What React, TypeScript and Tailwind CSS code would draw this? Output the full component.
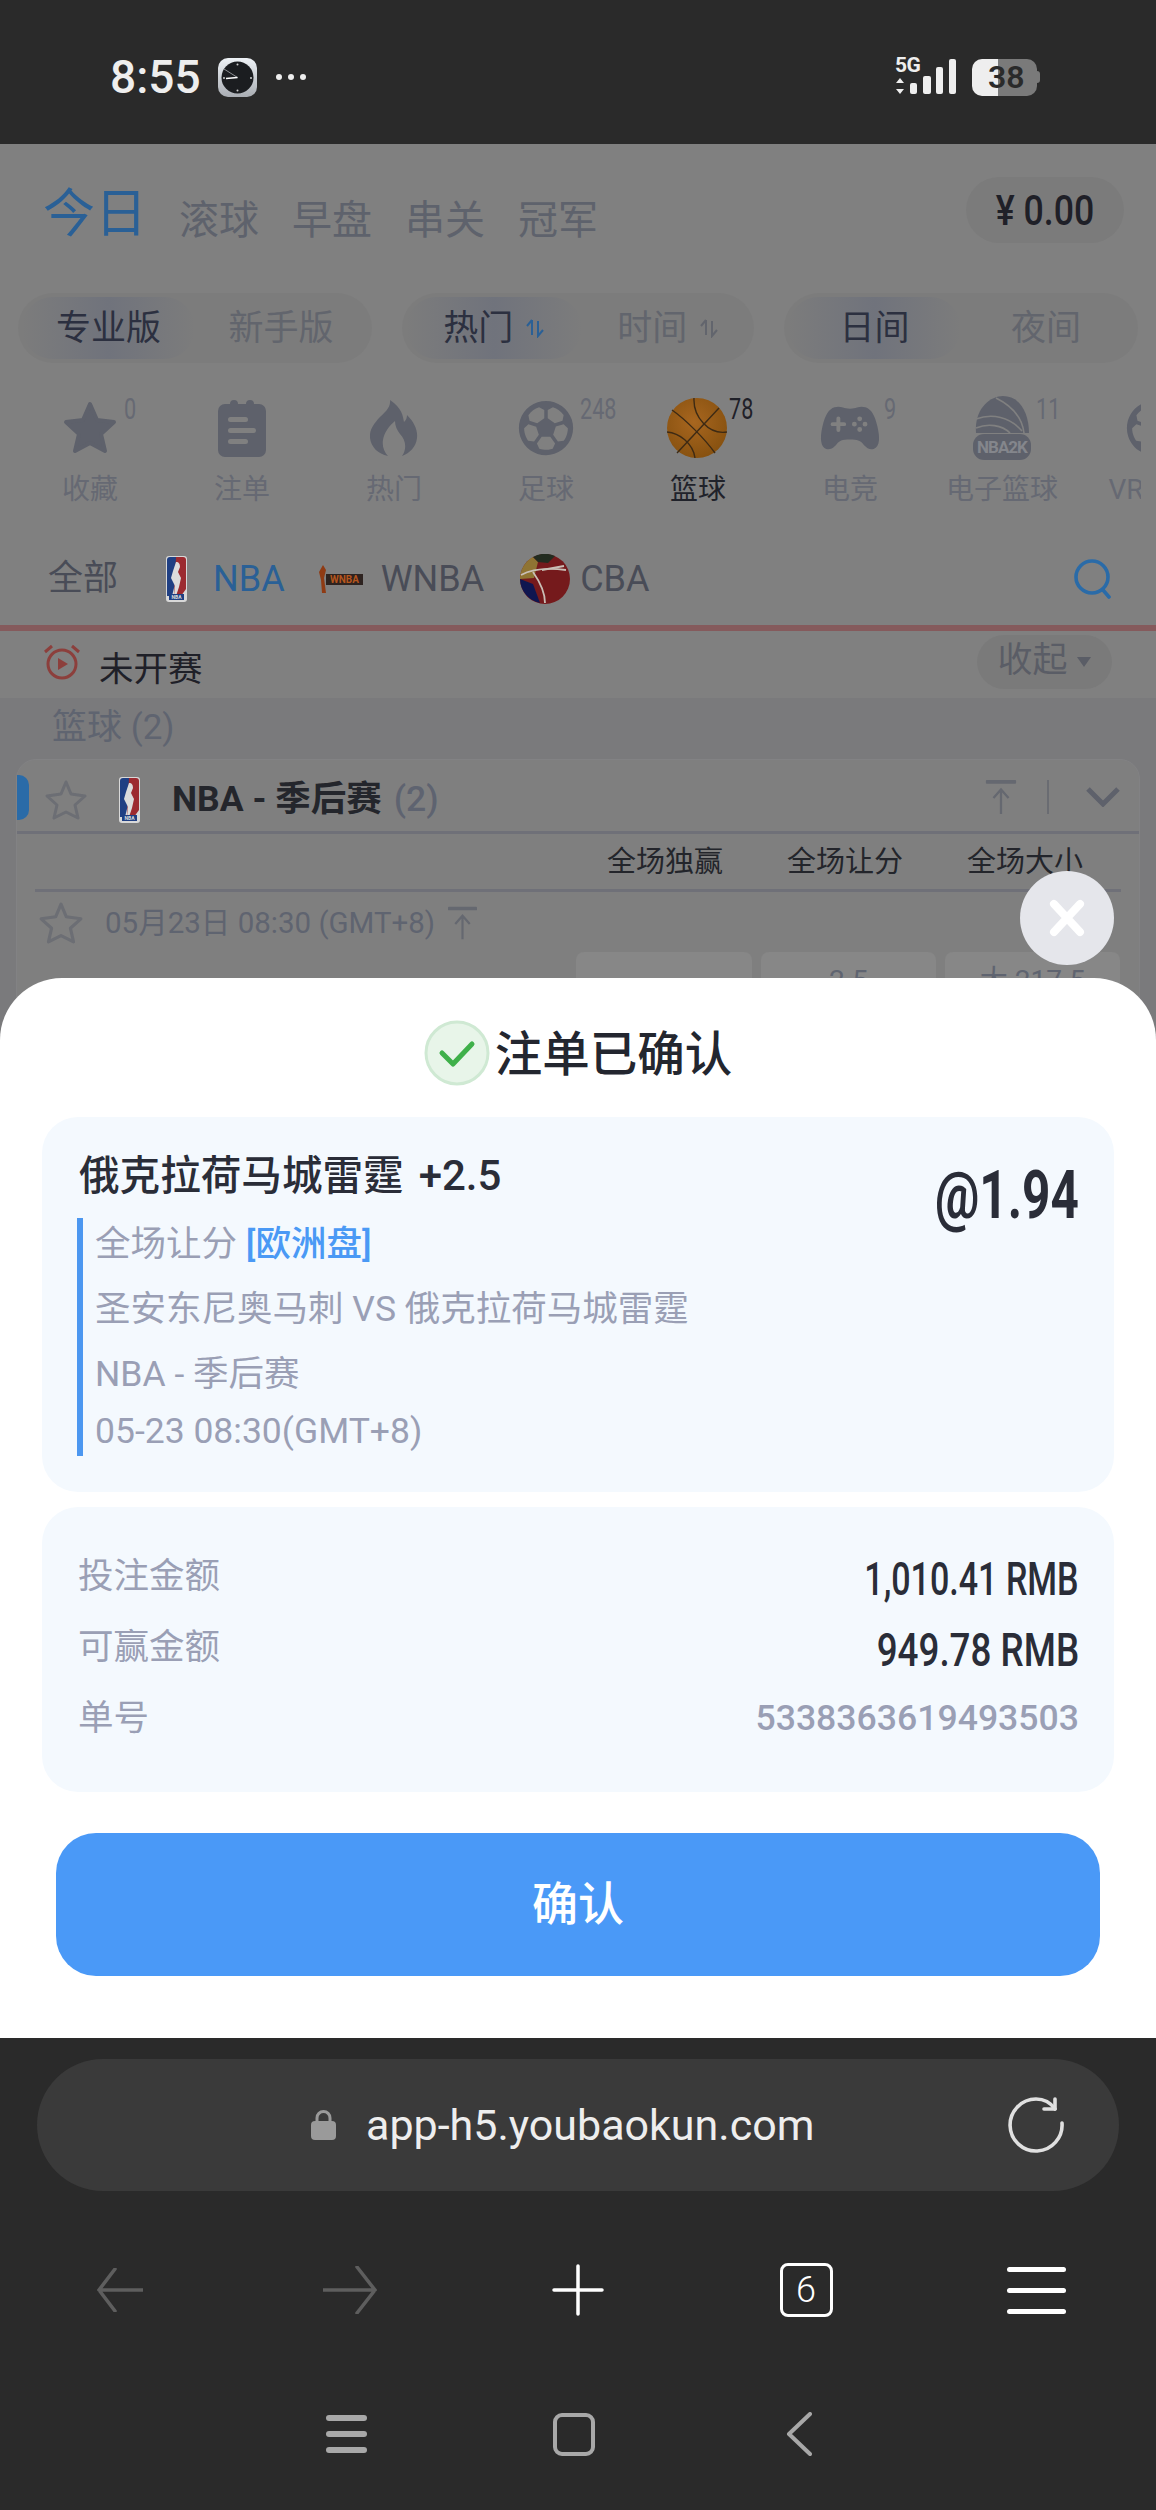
import { FaRegFutbol } from "react-icons/fa";
import { IoGameController } from "react-icons/io5";

const sports = [
  { label: "收藏", count: "0", icon: <StarIcon /> },
  { label: "注单", count: "", icon: <SlipIcon /> },
  { label: "热门", count: "", icon: <FlameIcon /> },
  { label: "足球", count: "248", icon: <FaRegFutbol className="w-[56px] h-[56px] text-[#5e616b]" /> },
  { label: "篮球", count: "78", icon: <BasketballIcon />, active: true },
  { label: "电竞", count: "9", icon: <IoGameController className="w-[62px] h-[62px] text-[#5e616b]" /> },
  { label: "电子篮球", count: "11", icon: <Nba2kIcon /> },
  { label: "VR体育", count: "", icon: <FaRegFutbol className="w-[56px] h-[56px] text-[#5e616b]" /> },
];

function StarIcon() {
  return (
    <svg viewBox="0 0 56 56" className="w-[56px] h-[56px]">
      <path d="M28 4 L35 20 L52 22 L39 34 L43 51 L28 43 L13 51 L17 34 L4 22 L21 20 Z" fill="#5e616b" stroke="#5e616b" strokeWidth="4" strokeLinejoin="round" />
    </svg>
  );
}

function OutlineStar({ className }: { className: string }) {
  return (
    <svg viewBox="0 0 44 44" className={className}>
      <path d="M22 4 L27 16 L41 18 L31 27 L34 40 L22 34 L10 40 L13 27 L3 18 L17 16 Z" fill="none" stroke="#6c6e74" strokeWidth="3" strokeLinejoin="round" />
    </svg>
  );
}

function SlipIcon() {
  return (
    <svg viewBox="0 0 48 58" className="w-[48px] h-[58px]">
      <path d="M7 5 h5 a4 4 0 0 1 8 0 h8 a4 4 0 0 1 8 0 h5 a7 7 0 0 1 7 7 v39 a7 7 0 0 1 -7 7 h-34 a7 7 0 0 1 -7 -7 v-39 a7 7 0 0 1 7 -7 z" fill="#5e616b" />
      <rect x="10" y="18" width="20" height="5" rx="2.5" fill="#808080" />
      <rect x="10" y="29" width="28" height="5" rx="2.5" fill="#808080" />
      <rect x="10" y="40" width="20" height="5" rx="2.5" fill="#808080" />
    </svg>
  );
}

function FlameIcon() {
  return (
    <svg viewBox="0 0 48 56" className="w-[48px] h-[56px]">
      <path d="M20 0 C32 8 33 16 34 22 C36 20 37 18 37 15 C44 22 48 30 47 38 C46 47 40 53 32 56 C37 49 36 40 30 34 C27 30 25 26 25 21 C19 26 14 33 13 40 C12 46 14 52 18 56 C8 54 1 47 0 38 C-1 30 4 24 9 18 C14 13 21 8 20 0 Z" fill="#5e616b" />
    </svg>
  );
}

function BasketballIcon() {
  return (
    <svg viewBox="0 0 60 62" className="w-[60px] h-[62px] -ml-[3px]">
      <defs>
        <radialGradient id="ball" cx="45%" cy="40%" r="65%">
          <stop offset="0%" stopColor="#a8661f" />
          <stop offset="100%" stopColor="#85500f" />
        </radialGradient>
      </defs>
      <circle cx="30" cy="31" r="30" fill="url(#ball)" />
      <g fill="none" stroke="#3d2a14" strokeWidth="1.4">
        <path d="M27 1 C26 20 42 38 60 35" />
        <path d="M52 11 L10 56" />
        <path d="M5 13 C18 22 38 42 48 56" />
        <path d="M0 35 C12 36 26 46 28 61" />
      </g>
    </svg>
  );
}

function Nba2kIcon() {
  return (
    <svg viewBox="0 0 60 66" className="w-[60px] h-[66px]">
      <path d="M4 38 C2 14 18 1 31 1 C48 1 57 18 57 38 Z" fill="#5e616b" />
      <g fill="none" stroke="#808080" strokeWidth="1.6">
        <path d="M4 24 C20 18 38 22 50 36" />
        <path d="M24 3 C38 10 50 20 52 38" />
        <path d="M4 33 C16 28 30 30 38 38" />
      </g>
      <rect x="1" y="39" width="58" height="26" rx="11" fill="#5e616b" />
      <text x="30" y="58" textAnchor="middle" fontSize="17" fontWeight="700" fill="#84868c" letterSpacing="-1">NBA2K</text>
    </svg>
  );
}

function NbaLogo({ className }: { className: string }) {
  return (
    <svg viewBox="0 0 21 46" className={className}>
      <rect width="21" height="46" rx="3" fill="#d8d8d8" />
      <path d="M1 4 a3 3 0 0 1 3 -3 h6 v23 l-4 16 h-5 z" fill="#1f3f83" />
      <path d="M10 1 h7 a3 3 0 0 1 3 3 v29 l-5 7 h-7 z" fill="#9c2a30" />
      <path d="M10 6 c3 0 4 2 4 5 l-2 5 l3 6 l-2 9 l-3 9 h-2 l1 -10 l-4 -8 l2 -7 z" fill="#dcdcdc" />
      <rect x="3" y="38" width="15" height="6" fill="#1f3f83" />
      <text x="10.5" y="43.4" textAnchor="middle" fontSize="5" fontWeight="700" fill="#dcdcdc">NBA</text>
    </svg>
  );
}

function WnbaLogo() {
  return (
    <svg viewBox="0 0 46 30" className="w-[46px] h-[30px] mr-[17px]">
      <path d="M5 1 L8 6 L6 14 L8 29 L4 29 L3 16 L1 8 Z" fill="#8f3b14" />
      <rect x="8" y="10" width="37" height="11" fill="#2e2320" />
      <text x="26.5" y="19" textAnchor="middle" fontSize="10" fontWeight="700" fill="#b5561d">WNBA</text>
    </svg>
  );
}

function CbaLogo() {
  return (
    <svg viewBox="0 0 50 50" className="w-[50px] h-[50px] mr-[10px]">
      <circle cx="25" cy="25" r="25" fill="#751a1c" />
      <path d="M13 3 A25 25 0 0 0 0 25 L14 24 L18 8 Z" fill="#8f7433" />
      <path d="M0 25 A25 25 0 0 0 20 49 L13 30 Z" fill="#0f1650" />
      <path d="M13 3 A25 25 0 0 1 35 2 L28 9 L18 8 Z" fill="#232c20" />
      <g fill="none" stroke="#c9bfb6" strokeWidth="1.8">
        <path d="M1 21 C14 14 30 14 46 16" />
        <path d="M13 18 C20 28 25 38 25 49" />
        <path d="M22 16 L44 12" />
      </g>
    </svg>
  );
}

function UpArrow({ className }: { className: string }) {
  return (
    <svg viewBox="0 0 32 36" className={className}>
      <rect x="0" y="0" width="32" height="4" rx="1" fill="#656870" />
      <path d="M16 36 V10 M8 19 L16 10 L24 19" fill="none" stroke="#656870" strokeWidth="2.4" />
    </svg>
  );
}

function StatusBar() {
  return (
    <div className="h-[144px] shrink-0 flex items-center justify-between pl-[110px] pr-[115px] pt-[10px] bg-[#2a2a2a]">
      <div className="flex items-center">
        <span className="text-[46px] leading-none font-medium text-[#eeeeee] w-[108px]">8:55</span>
        <svg viewBox="0 0 39 39" className="w-[39px] h-[39px]">
          <defs>
            <linearGradient id="clockbg" x1="0" y1="0" x2="0" y2="1">
              <stop offset="0%" stopColor="#eef2f6" />
              <stop offset="100%" stopColor="#a9adb3" />
            </linearGradient>
          </defs>
          <rect width="39" height="39" rx="10" fill="url(#clockbg)" />
          <circle cx="19.5" cy="19.5" r="16" fill="#1b1d20" />
          <path d="M19.5 19.5 L6 11" stroke="#8f9296" strokeWidth="1" />
          <path d="M19.5 19.5 L8 20.5" stroke="#ffffff" strokeWidth="1.6" />
          <circle cx="19.5" cy="6.5" r="1" fill="#cccccc" />
          <circle cx="19.5" cy="32.5" r="1" fill="#cccccc" />
          <circle cx="6" cy="20" r="1" fill="#cccccc" />
          <circle cx="33" cy="20" r="1" fill="#cccccc" />
        </svg>
        <div className="flex gap-[6px] ml-[19px]">
          <span className="w-[6px] h-[6px] rounded-full bg-[#eeeeee]" />
          <span className="w-[6px] h-[6px] rounded-full bg-[#eeeeee]" />
          <span className="w-[6px] h-[6px] rounded-full bg-[#eeeeee]" />
        </div>
      </div>
      <div className="flex items-center">
        <svg viewBox="0 0 62 40" className="w-[62px] h-[40px] overflow-visible">
          <text x="0" y="15" fontSize="21" fontWeight="700" fill="#eeeeee" letterSpacing="-0.5">5G</text>
          <path d="M5 21 L9 26 H1 Z M5 37 L9 32 H1 Z" fill="#eeeeee" />
          <rect x="15" y="26" width="7" height="11" rx="2" fill="#eeeeee" />
          <rect x="28" y="19" width="8" height="18" rx="2" fill="#eeeeee" />
          <rect x="41" y="10" width="7" height="27" rx="2" fill="#eeeeee" />
          <rect x="54" y="2" width="7" height="35" rx="2" fill="#eeeeee" />
        </svg>
        <div className="relative ml-[15px] w-[69px] h-[37px] flex items-center">
          <div className="w-[26px] h-full rounded-l-[10px] bg-[#eeeeee]" />
          <div className="w-[39px] h-full rounded-r-[10px] bg-[#7a7a7a]" />
          <div className="w-[3px] h-[12px] rounded-r-sm bg-[#7a7a7a]" />
          <span className="absolute left-[16px] top-0 text-[32px] leading-[37px] font-semibold text-[#2a2a2a]">38</span>
        </div>
      </div>
    </div>
  );
}

function Toggle({ on, off, w, onW, gap, sort }: { on: string; off: string; w: string; onW: string; gap: string; sort?: boolean }) {
  return (
    <div className={`${w} relative h-[70px] rounded-[35px] bg-[#7c7c7c] flex items-center pl-[4px] text-[35px] leading-none`}>
      <div className={`${onW} h-[62px] rounded-[31px] bg-gradient-to-r from-[#7c7c7c] via-[#70737c] to-[#7c7c7c] flex items-center justify-center text-[#2c3040]`}>
        {on}
        {sort && <SortIcon color="#2a6096" />}
      </div>
      <div className={`${gap} flex items-center justify-center text-[#62656d]`}>
        {off}
        {sort && <SortIcon color="#62656d" />}
      </div>
    </div>
  );
}

function SortIcon({ color }: { color: string }) {
  return (
    <svg viewBox="0 0 20 20" className="w-[20px] h-[20px] ml-[12px]" fill="none" stroke={color} strokeWidth="2">
      <path d="M7 2 V17 M7 2 L2 8 M13 3 V18 L18 12" />
    </svg>
  );
}

function DimmedPage() {
  return (
    <div className="text-[#5e626c]">
      {/* tabs + balance */}
      <div className="h-[149px] flex items-start pl-[43px] pr-[32px] pt-[33px]">
        <span className="text-[52px] leading-[60px] text-[#2a6096] mr-[32px] mt-[8px] whitespace-nowrap">今日</span>
        <div className="flex gap-[33px] text-[40px] leading-[48px] pt-[20px]">
          <span>滚球</span>
          <span>早盘</span>
          <span>串关</span>
          <span>冠军</span>
        </div>
        <div className="ml-auto w-[158px] h-[66px] rounded-[33px] bg-[#7b7b7b] flex items-center justify-center text-[42px] font-medium text-[#1f2028]">
          <span className="scale-x-[0.85] whitespace-nowrap">¥ 0.00</span>
        </div>
      </div>

      <div className="flex pl-[18px] gap-[30px] h-[70px]">
        <Toggle on="专业版" off="新手版" w="w-[354px]" onW="w-[173px]" gap="w-[172px]" />
        <Toggle on="热门" off="时间" w="w-[352px]" onW="w-[178px]" gap="w-[173px]" sort />
        <Toggle on="日间" off="夜间" w="w-[354px]" onW="w-[173px]" gap="w-[170px]" />
      </div>

      {/* sports */}
      <div className="ml-[14px] w-[1127px] h-[170px] pt-[32px] flex overflow-hidden">
        {sports.map((s) => (
          <div key={s.label} className="relative w-[152px] shrink-0 flex flex-col items-center">
            <div className="h-[66px] flex items-center justify-center">{s.icon}</div>
            <span className={`mt-[13px] text-[28px] leading-[32px] whitespace-nowrap ${s.active ? "text-[#20222a]" : "text-[#666973]"}`}>{s.label}</span>
            <span className={`absolute top-[-2px] text-[30px] leading-[32px] scale-x-[0.72] origin-left ${s.active ? "left-[107px] text-[#1f2028]" : "left-[110px] text-[#666973]"}`}>{s.count}</span>
          </div>
        ))}
      </div>

      {/* leagues */}
      <div className="h-[92px] flex items-center pl-[48px] pr-[43px] text-[35px]">
        <span className="mr-[48px] text-[#494c57]">全部</span>
        <NbaLogo className="w-[21px] h-[46px] mr-[26px]" />
        <span className="text-[36px] text-[#2a6096] mr-[33px]">NBA</span>
        <WnbaLogo />
        <span className="text-[36px] text-[#494c57] mr-[36px]">WNBA</span>
        <CbaLogo />
        <span className="text-[36px] text-[#494c57]">CBA</span>
        <svg viewBox="0 0 40 40" className="ml-auto w-[40px] h-[40px]" fill="none" stroke="#2a6ba8" strokeWidth="3.6">
          <circle cx="19" cy="18" r="16" />
          <path d="M30 31 L36 38" strokeLinecap="round" />
        </svg>
      </div>

      <div className="h-[6px] bg-[#855a5c]" />

      {/* not started */}
      <div className="h-[67px] flex items-center pl-[43px] pr-[44px]">
        <svg viewBox="0 0 38 38" className="w-[38px] h-[38px] mr-[18px] -mt-[6px]" fill="none" stroke="#8c3f3c" strokeWidth="3">
          <circle cx="19" cy="21" r="14" />
          <path d="M2 9 L9 3 M36 9 L29 3" />
          <path d="M15 15 L25 21 L15 27 Z" fill="#8c3f3c" stroke="none" />
        </svg>
        <span className="text-[34.5px] leading-[40px] text-[#1f2028] mt-[8px]">未开赛</span>
        <div className="ml-auto w-[135px] h-[54px] rounded-[27px] bg-[#7a7a7a] flex items-center justify-center text-[35px] text-[#5a5d66] -mt-[6px]">
          收起
          <svg viewBox="0 0 16 12" className="w-[16px] h-[12px] ml-[8px]"><path d="M1 1 H15 L8 11 Z" fill="#5a5d66" /></svg>
        </div>
      </div>

      {/* basketball section */}
      <div className="bg-[#7a7a7c] h-[400px] px-[16px]">
        <div className="h-[61px] flex items-center pl-[36px] text-[35px] text-[#5f6470]">
          篮球 (2)
        </div>
        <div className="relative rounded-t-[20px] border border-[#828284] bg-[#7f7f7f] h-[340px]">
          <div className="h-[74px] flex items-center border-b-[3px] border-[#6f7078] pr-[19px] pt-[8px]">
            <div className="w-[12px] h-[45px] rounded-r-[10px] bg-[#2a6ba8] mr-[15px] -mt-[5px]" />
            <OutlineStar className="w-[44px] h-[44px] mr-[31px]" />
            <NbaLogo className="w-[21px] h-[46px] mr-[32px]" />
            <span className="text-[35.5px] font-bold text-[#24262c]">NBA - 季后赛</span>
            <span className="text-[35.5px] font-medium text-[#5e6370] ml-[12px]">(2)</span>
            <UpArrow className="ml-auto w-[32px] h-[34px] mr-[30px] -mt-[5px]" />
            <div className="w-[2px] h-[34px] bg-[#6a6c72] mr-[37px] -mt-[5px]" />
            <svg viewBox="0 0 34 20" className="w-[34px] h-[20px] -mt-[5px]" fill="none" stroke="#5e616b" strokeWidth="5"><path d="M2 2 L17 17 L32 2" /></svg>
          </div>
          <div className="h-[58px] mx-[18px] flex justify-end border-b-[3px] border-[#6f7078] text-[29px] text-[#23252b]">
            <div className="flex items-center gap-[64px] pr-[38px] pt-[2px]">
              <span>全场独赢</span>
              <span>全场让分</span>
              <span>全场大小</span>
            </div>
          </div>
          <div className="h-[60px] flex items-center pl-[21px] pt-[2px]">
            <OutlineStar className="w-[46px] h-[46px] mr-[21px]" />
            <span className="text-[29.5px] text-[#5f6470]">05月23日 08:30 (GMT+8)</span>
            <UpArrow className="w-[29px] h-[34px] ml-[13px]" />
          </div>
          <div className="flex justify-end gap-[9px] pr-[19px] text-[28px] text-[#5f6470]">
            <div className="w-[176px] h-[60px] rounded-[8px] bg-[#878787]" />
            <div className="w-[175px] h-[60px] rounded-[8px] bg-[#878787] text-center pt-[8px]">2.5</div>
            <div className="w-[175px] h-[60px] rounded-[8px] bg-[#878787] text-center pt-[8px]">大 217.5</div>
          </div>
        </div>
      </div>
    </div>
  );
}

function SuccessSheet() {
  return (
    <div className="absolute left-0 right-0 bottom-0 h-[1060px] rounded-t-[62px] bg-white pt-[42px]">
      <div className="h-[68px] flex items-center justify-center">
        <svg viewBox="0 0 66 66" className="w-[66px] h-[66px] mr-[5px] -mt-[3px]">
          <circle cx="33" cy="33" r="31" fill="#e8f5e9" stroke="#cfe9d3" strokeWidth="3" />
          <path d="M18 33 L29 44 L48 24" fill="none" stroke="#3fb04a" strokeWidth="5" strokeLinecap="round" strokeLinejoin="round" />
        </svg>
        <span className="text-[47.5px] leading-none font-medium text-[#23262f] mt-[3px]">注单已确认</span>
      </div>

      <div className="mx-[42px] mt-[29px] h-[375px] rounded-[36px] bg-[#f4f9fe] pt-[39px] pl-[35px] pr-[35px] flex justify-between">
        <div>
          <div className="text-[40.6px] leading-[40px] font-medium text-[#2a2d38] pl-[2px] whitespace-nowrap">俄克拉荷马城雷霆<span className="text-[42px] ml-[15px]">+2.5</span></div>
          <div className="mt-[22px] border-l-[6px] border-[#4c97f0] pl-[12px] text-[35.5px] text-[#9a9fb5]">
            <div className="h-[50px] leading-[50px] pt-[1px]">全场让分 <span className="font-medium text-[#4a99f5]">[欧洲盘]</span></div>
            <div className="h-[50px] leading-[50px] mt-[16px]">圣安东尼奥马刺 VS 俄克拉荷马城雷霆</div>
            <div className="h-[50px] leading-[50px] mt-[15px]">NBA - 季后赛</div>
            <div className="h-[50px] leading-[50px] mt-[7px]">05-23 08:30(GMT+8)</div>
          </div>
        </div>
        <div className="mt-[5px] h-[70px] text-[66px] leading-[70px] font-bold text-[#2a2d38] scale-x-[0.75] origin-right">@1.94</div>
      </div>

      <div className="mx-[42px] mt-[15px] h-[285px] rounded-[36px] bg-[#f4f9fe] pt-[45px] pr-[35px] pl-[36px] flex flex-col gap-[21px] text-[35.5px] text-[#9a9fb5]">
        <div className="h-[50px] flex items-center justify-between">
          <span>投注金额</span>
          <span className="text-[46px] font-medium text-[#2a2d38] scale-x-[0.74] origin-right mt-[4px] whitespace-nowrap">1,010.41 RMB</span>
        </div>
        <div className="h-[50px] flex items-center justify-between">
          <span>可赢金额</span>
          <span className="text-[46px] font-medium text-[#2a2d38] scale-x-[0.8] origin-right mt-[4px] whitespace-nowrap">949.78 RMB</span>
        </div>
        <div className="h-[50px] flex items-center justify-between">
          <span>单号</span>
          <span className="text-[35.6px] font-medium">5338363619493503</span>
        </div>
      </div>

      <button className="block mx-[56px] mt-[41px] w-[1044px] h-[143px] rounded-[40px] bg-[#4a99f7] text-[46px] font-medium text-white">
        确认
      </button>
    </div>
  );
}

function BrowserBar() {
  return (
    <div className="flex-1 bg-[#2a2a2a] pt-[21px]">
      <div className="relative mx-[37px] h-[132px] rounded-full bg-[#3a3a3a] flex items-center pl-[274px]">
        <svg viewBox="0 0 25 30" className="w-[25px] h-[30px] mr-[30px]">
          <path d="M6 12 V8 a6.5 6.5 0 0 1 13 0 V12" fill="none" stroke="#9a9a9a" strokeWidth="3" />
          <rect x="0" y="11" width="25" height="19" rx="4" fill="#9a9a9a" />
        </svg>
        <span className="text-[43px] leading-none text-[#eeeeee]">app-h5.youbaokun.com</span>
        <svg viewBox="0 0 56 56" className="absolute left-[971px] top-[38px] w-[56px] h-[56px]" fill="none" stroke="#e0e0e0" strokeWidth="3.6" strokeLinecap="round" strokeLinejoin="round">
          <path d="M54 26 A26 26 0 1 1 28 2 Q40 2 47 12" />
          <path d="M47 2 V12 H36" />
        </svg>
      </div>

      <div className="h-[200px] flex items-center pb-[2px]">
        <div className="w-[240px] flex justify-center">
          <svg viewBox="0 0 46 44" className="w-[46px] h-[44px]" fill="none" stroke="#5e5e5e" strokeWidth="3.5" strokeLinecap="round"><path d="M46 22 H2 M18 1 L2 22 L18 43" /></svg>
        </div>
        <div className="w-[220px] flex justify-center">
          <svg viewBox="0 0 54 48" className="w-[54px] h-[48px]" fill="none" stroke="#5e5e5e" strokeWidth="3.5" strokeLinecap="round"><path d="M0 24 H52 M34 1 L52 24 L34 47" /></svg>
        </div>
        <div className="w-[236px] flex justify-center">
          <svg viewBox="0 0 52 52" className="w-[52px] h-[52px]" fill="none" stroke="#ffffff" strokeWidth="3.5" strokeLinecap="round"><path d="M26 2 V50 M2 26 H50" /></svg>
        </div>
        <div className="w-[220px] flex justify-center">
          <div className="w-[53px] h-[54px] rounded-[8px] border-[3px] border-white flex items-center justify-center text-[36px] leading-none font-light text-white">6</div>
        </div>
        <div className="w-[240px] flex flex-col items-center gap-[16px]">
          <div className="w-[59px] h-[5px] rounded-full bg-white" />
          <div className="w-[59px] h-[5px] rounded-full bg-white" />
          <div className="w-[59px] h-[5px] rounded-full bg-white" />
        </div>
      </div>

      <div className="flex items-center pl-[326px] pt-[21px]">
        <div className="w-[41px] flex flex-col gap-[10px]">
          <div className="h-[6px] rounded-full bg-[#a8a8a8]" />
          <div className="h-[6px] rounded-full bg-[#a8a8a8]" />
          <div className="h-[6px] rounded-full bg-[#a8a8a8]" />
        </div>
        <div className="ml-[186px] w-[42px] h-[43px] rounded-[9px] border-[4px] border-[#a8a8a8]" />
        <svg viewBox="0 0 26 44" className="ml-[191px] w-[26px] h-[44px]" fill="none" stroke="#a8a8a8" strokeWidth="4" strokeLinecap="round" strokeLinejoin="round"><path d="M24 2 L3 22 L24 42" /></svg>
      </div>
    </div>
  );
}

export default function App() {
  return (
    <div className="w-[1156px] h-[2510px] flex flex-col overflow-hidden bg-[#2a2a2a] [font-family:Roboto,'Noto_Sans_CJK_SC',sans-serif]">
      <StatusBar />
      <div className="relative h-[1894px] shrink-0 overflow-hidden bg-[#808080]">
        <DimmedPage />
        <div className="absolute left-[1020px] top-[727px] w-[94px] h-[94px] rounded-full bg-[#e5e6eb] flex items-center justify-center">
          <svg viewBox="0 0 40 40" className="w-[40px] h-[40px]" fill="none" stroke="#ffffff" strokeWidth="8" strokeLinecap="round"><path d="M7 6 L33 34 M33 6 L7 34" /></svg>
        </div>
        <SuccessSheet />
      </div>
      <BrowserBar />
    </div>
  );
}
